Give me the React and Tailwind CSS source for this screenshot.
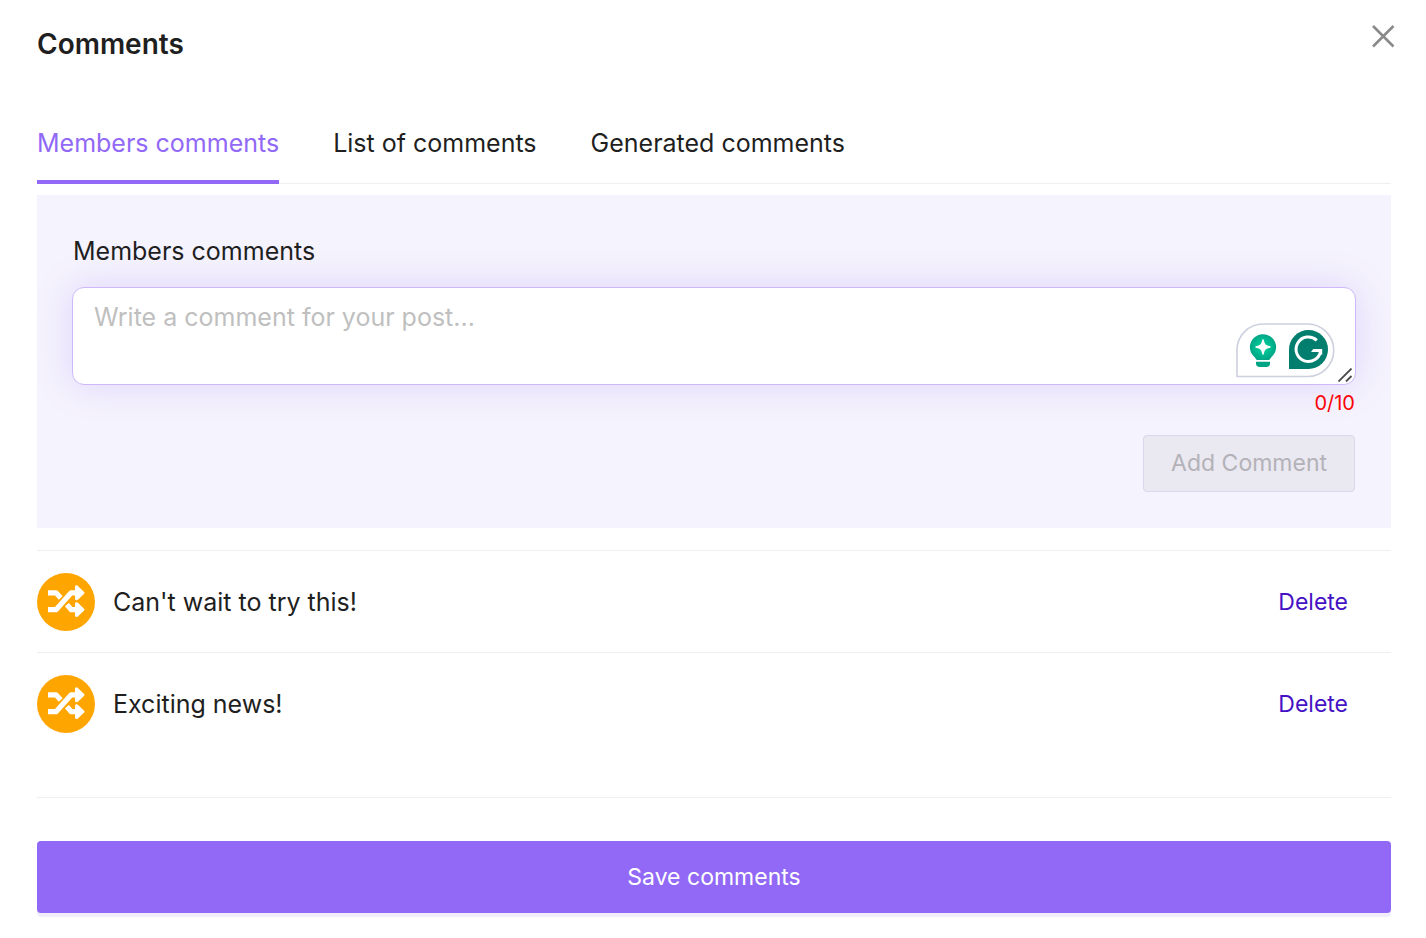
import React, { useState } from 'react';

const MAX_COMMENTS = 10;

const TABS = [
  { id: 'members', label: 'Members comments' },
  { id: 'list', label: 'List of comments' },
  { id: 'generated', label: 'Generated comments' }
];

const INITIAL_COMMENTS = [
  { id: 1, text: "Can't wait to try this!" },
  { id: 2, text: 'Exciting news!' }
];

function CloseIcon() {
  return (
    <svg width="24" height="24" viewBox="0 0 24 24" fill="none" stroke="#8a8a8a" strokeWidth="2.6" aria-hidden="true">
      <path d="M2 2 22.5 22.5M22.5 2 2 22.5" />
    </svg>
  );
}

function ShuffleBadge() {
  return (
    <svg className="shrink-0" width="58" height="58" viewBox="0 0 58 58" aria-hidden="true">
      <circle cx="29" cy="29" r="29" fill="#ffa500" />
      <g fill="none" stroke="#fff" strokeWidth="5.2" strokeLinejoin="round">
        <path d="M11 36.7h8L34.200 19.800H40" />
        <path d="M11 19.800h8l4.700 5.200" />
        <path d="m29.900 31.600 4.400 5.100H40" />
      </g>
      <path d="M38 14.200c0-1.800 1.700-2.400 2.900-1.300l6.200 6.100c.5.500.5 1.200 0 1.700l-6.200 6.100c-1.200 1-2.900.4-2.900-1.300z" fill="#fff" />
      <path d="M38 31c0-1.800 1.700-2.400 2.900-1.300l6.200 6.100c.5.500.5 1.200 0 1.700l-6.200 6.100c-1.200 1-2.900.4-2.900-1.300z" fill="#fff" />
    </svg>
  );
}

// Writing assistant bubble that floats in the corner of the text box
function AssistantBubble() {
  return (
    <svg className="absolute right-[21px] bottom-[7px]" width="99" height="55" viewBox="0 0 99 55" aria-hidden="true">
      <defs>
        <radialGradient id="bulb">
          <stop offset="0" stopColor="#00cf9c" />
          <stop offset="0.6" stopColor="#00bb91" />
          <stop offset="1" stopColor="#00a585" />
        </radialGradient>
      </defs>
      <path d="M1 53.5V27A26 26 0 0 1 27 1h44.5a26.250 26.250 0 0 1 0 52.5z" fill="#fff" stroke="#cdd0de" strokeWidth="1.6" />
      <path d="M27 11.200a13.100 13.100 0 0 0-13.100 13.100c0 4.300 2.100 7.700 5 10.100 1 .9 1 2.500 2.300 2.500h11.600c1.300 0 1.300-1.600 2.300-2.500 2.900-2.400 5-5.800 5-10.100A13.100 13.100 0 0 0 27 11.200z" fill="url(#bulb)" />
      <path d="M20 38.800h14v1.700c0 2.300-1.500 3.500-3.600 3.500h-6.800c-2.100 0-3.600-1.200-3.600-3.500z" fill="#00a585" />
      <path d="M27 17c1 4.600 2.400 6.100 7 7-4.600.9-6 2.400-7 7-1-4.600-2.400-6.100-7-7 4.600-.9 6-2.400 7-7z" fill="#fff" stroke="#fff" strokeWidth="1.4" strokeLinejoin="round" />
      <path d="M53 46V26.500A19.500 19.500 0 1 1 72.500 46z" fill="#027e6f" />
      <path d="M80.800 17.300A12.300 12.300 0 1 0 84.600 27.500" fill="none" stroke="#fff" strokeWidth="3" />
      <path d="M77.300 26H86.200V32.200L83 28.900H75z" fill="#fff" />
    </svg>
  );
}

function ResizeGrip() {
  return (
    <svg className="absolute right-[3px] bottom-[3px] pointer-events-none" width="15" height="14" viewBox="0 0 15 14" fill="none" stroke="#4a4a4a" strokeWidth="1.8" aria-hidden="true">
      <path d="M.5 13.5 13.500.5M8 13.5l5.500-5.500" />
    </svg>
  );
}

function CommentRow({ comment, onDelete }) {
  return (
    <li className="flex items-center justify-between pt-[22px] pb-[21px] pr-[43px] border-t border-[#efefef]">
      <div className="flex items-center gap-[18px]">
        <ShuffleBadge />
        <span className="text-[25px] leading-8">{comment.text}</span>
      </div>
      <button type="button" className="text-[23px] leading-8 text-[#4411c4] cursor-pointer" onClick={() => onDelete(comment.id)}>
        Delete
      </button>
    </li>
  );
}

function App() {
  const [activeTab, setActiveTab] = useState('members');
  const [draft, setDraft] = useState('');
  const [comments, setComments] = useState(INITIAL_COMMENTS);

  const addComment = () => {
    setComments(prev => [...prev, { id: Date.now(), text: draft.trim() }]);
    setDraft('');
  };

  const removeComment = id => setComments(prev => prev.filter(c => c.id !== id));

  return (
    <main className="bg-white pl-[37px] pr-[35px] pt-6 pb-[25px] font-[Inter,'Liberation_Sans',sans-serif] text-[#1f1f1f]">
      <header className="relative">
        <h1 className="text-[28px] leading-10 font-semibold">Comments</h1>
        <button type="button" aria-label="Close" className="absolute top-0 -right-1 cursor-pointer" onClick={() => setDraft('')}>
          <CloseIcon />
        </button>
      </header>

      {/* Tabs */}
      <div role="tablist" className="mt-[63px] flex gap-[54px] shadow-[inset_0_-1px_0_#efefef]">
        {TABS.map(tab => (
          <button
            key={tab.id}
            type="button"
            role="tab"
            aria-selected={tab.id === activeTab}
            onClick={() => setActiveTab(tab.id)}
            className={`pb-[21px] text-[25px] leading-8 border-b-4 cursor-pointer ${
              tab.id === activeTab ? 'text-[#9169f6] border-[#9169f6]' : 'border-transparent'
            }`}
          >
            {tab.label}
          </button>
        ))}
      </div>

      {/* Comment form */}
      <section className="mt-[11px] p-9 bg-[#f5f3fd]">
        <label htmlFor="comment" className="block pt-1 text-[25px] leading-8">
          Members comments
        </label>
        <div className="relative mt-5 -mx-px">
          <textarea
            id="comment"
            value={draft}
            onChange={e => setDraft(e.target.value)}
            placeholder="Write a comment for your post..."
            className="block w-full h-[98px] resize-none rounded-xl border border-[#ccb8fa] bg-white px-[21px] py-3 text-[25px] leading-[34px] outline-none placeholder:text-[#bfbfbf] shadow-[0_0_36px_rgba(147,107,247,0.22)]"
          />
          <AssistantBubble />
          <ResizeGrip />
        </div>
        <p className="mt-1 text-right text-[20px] leading-7 text-[#ff0000]">0/{MAX_COMMENTS}</p>
        <div className="mt-[18px] flex justify-end">
          <button
            type="button"
            disabled={!draft.trim()}
            onClick={addComment}
            className="h-[57px] px-[27px] rounded-[4px] border border-[#dad6ec] bg-[#eae8f1] text-[23px] text-[#b3b2b8]"
          >
            Add Comment
          </button>
        </div>
      </section>

      <ul className="mt-[22px] pb-[43px] border-b border-[#efefef]">
        {comments.map(comment => (
          <CommentRow key={comment.id} comment={comment} onDelete={removeComment} />
        ))}
      </ul>

      <button
        type="button"
        className="mt-[43px] w-full h-[72px] rounded-[4px] bg-[#9169f6] text-[23px] text-white shadow-[0_4px_0_#f1edfd] cursor-pointer"
      >
        Save comments
      </button>
    </main>
  );
}

export default App;
